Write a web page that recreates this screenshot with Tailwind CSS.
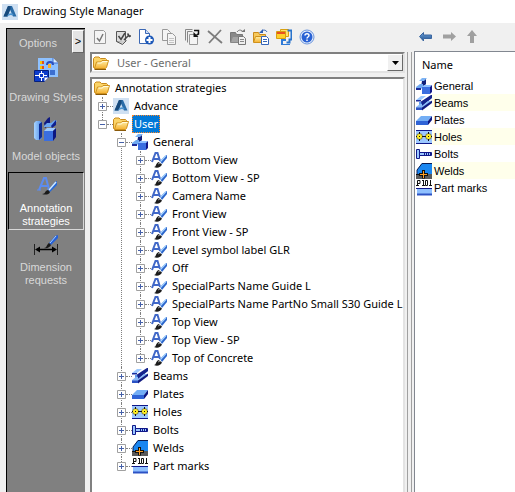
<!DOCTYPE html>
<html lang="en">
<head>
  <meta charset="UTF-8" />
  <meta name="viewport" content="width=device-width, initial-scale=1.0" />
  <title>Drawing Style Manager</title>
  <script src="https://cdn.jsdelivr.net/npm/@tailwindcss/browser@4"></script>
</head>
<body class="h-screen flex flex-col overflow-hidden bg-[#f0f0f0] text-black text-[11px] font-['Noto_Sans',sans-serif]">

  <!-- icon set (not display:none, the gradients would stop working) -->
  <svg class="absolute size-0">
    <defs>
      <linearGradient id="gFolder" x1="0" y1="0" x2="0" y2="1"><stop offset="0" stop-color="#fff0a8" /><stop offset="1" stop-color="#f5b02e" /></linearGradient>
      <linearGradient id="gBlue" x1="0" y1="0" x2="1" y2="0"><stop offset="0" stop-color="#a8d4ff" /><stop offset="1" stop-color="#4a8ae8" /></linearGradient>
      <linearGradient id="gArrow" x1="0" y1="0" x2="0" y2="1"><stop offset="0" stop-color="#6fa4da" /><stop offset="1" stop-color="#1f4f8f" /></linearGradient>
    </defs>
    <symbol id="folder" viewBox="0 0 16 16">
      <path d="M.5 12.500V3.500L2 2h4l1.500 1.500h5l1 1V7l-10 7z" fill="#fbd468" stroke="#c98a1c" />
      <path d="M1.500 13.500 3.500 7h4L9 5.500h6.500L13.500 12.500l-1 1z" fill="url(#gFolder)" stroke="#d0921c" />
      <path d="M4.500 8h4L9.500 6.500h5" fill="none" stroke="#fffbe0" />
      <path d="M1.500 14.500h11.500" stroke="#8a5a0a" />
    </symbol>
    <symbol id="logo" viewBox="0 0 16 16">
      <rect width="16" height="16" fill="#cfe0f2" />
      <path d="M6 2h4l4.500 10.500H11L8 5.500 5.500 12.500H1.500z" fill="#2a6ca8" />
      <path d="M6 2h2.500v3L5.500 12.500h-4z" fill="#174a7c" />
      <path d="M5 12.500c1-3 4-4 6.500-2.500l-.5 1.500C9 10.500 7 11 5 12.500z" fill="#4b93cf" />
    </symbol>
    <symbol id="general" viewBox="0 0 16 16">
      <path d="M3 3 6 0h5L9 2v5l-2 1V3z" fill="#7db4f5" />
      <path d="M6 3h2l2-2v5l-3 3H5z" fill="#10207a" />
      <path d="M0 9 4 6h3v3l-3 3H0z" fill="#6ea8f0" />
      <path d="M0 10h5v2H0z" fill="#1a2a9a" />
      <path d="m6 9 2-2h8l-2 2z" fill="#8fc0ff" />
      <path d="M6 9h8v7H6z" fill="#3a6ee0" />
      <path d="m14 9 2-2v7l-2 2z" fill="#10188a" />
    </symbol>
    <symbol id="beams" viewBox="0 0 16 16">
      <path d="m0 5 5-4h5L5 5z" fill="#9cc9ff" />
      <path d="M0 5h5v1.500H0z" fill="#1c2f9c" />
      <path d="M3 7h2l9-6h2v2L6 11v2H3z" fill="#5d9bee" />
      <path d="M5 6.500 15 0h1v3L6 11z" fill="#16248c" />
      <path d="M0 12 4 9h2v2l6-5h4L6 13H0z" fill="#8abaf7" />
      <path d="M0 12.500h6V15H0z" fill="#2c52c4" />
      <path d="m6 12.500 10-7V8L6 15.500z" fill="#101a80" />
    </symbol>
    <symbol id="plates" viewBox="0 0 16 16">
      <path d="m0 9 5-5h11l-4 5z" fill="#73aef5" />
      <path d="M0 9h12v4H0z" fill="#2f63d6" />
      <path d="m12 9 4-5v4l-4 5z" fill="#0c1680" />
    </symbol>
    <symbol id="holes" viewBox="0 0 16 16">
      <path d="M0 1h16v14H0z" fill="#9cc8ff" />
      <path d="M0 1.500h16M0 14.500h16" stroke="#10188a" />
      <circle cx="3.500" cy="7.500" r="3" fill="#ffee22" stroke="#444" stroke-width=".6" />
      <circle cx="12.500" cy="7.500" r="3" fill="#ffee22" stroke="#444" stroke-width=".6" />
      <path d="M0 7.500h1M3 7.500h1M6 7.500h4M12 7.500h1M15 7.500h1M3.500 3v2M3.500 10v2M12.500 3v2M12.500 10v2" stroke="#111" />
    </symbol>
    <symbol id="bolts" viewBox="0 0 16 16">
      <path d="M.5 3.500h3v9h-3z" fill="#9cc8ff" stroke="#10188a" />
      <path d="M3.500 6.500h12v3h-12z" fill="#9cc8ff" stroke="#10188a" />
      <path d="M8 8h8" stroke="#10188a" stroke-width="2" stroke-dasharray="1 1" />
    </symbol>
    <symbol id="welds" viewBox="0 0 16 16">
      <path d="M0 11h16v5H0z" fill="#5a5a5a" />
      <path d="M1 11V7l5-7h10v11z" fill="#1a86f0" />
      <path d="M1 11V7l5-6.500h10" fill="none" stroke="#0a1c50" />
      <path d="M0 11.500h4" stroke="#111" />
      <path d="M7.500 7v8.500M3 11.500h9" stroke="#111" stroke-width="3" />
      <path d="M7.500 8v7M4 11.500h7" stroke="#ffa025" />
    </symbol>
    <symbol id="marks" viewBox="0 0 16 16">
      <path d="M1.500 6V.5h2.500v3H2M7.500 0v5.500M6 .5h2M9.500.5h2v5h-2zM14.500 0v6M0 5.500h3M6 5.500h3M13 5.500h3" fill="none" stroke="#111" />
      <path d="M1 8h15v7H1z" fill="#8fc0ff" />
      <path d="M0 8.500h16" stroke="#10188a" />
      <path d="M1 14.500h15" stroke="#2c52c4" stroke-width="2" />
    </symbol>
    <symbol id="style" viewBox="0 0 16 16">
      <path d="M1 10 4.500 1h2L9 9M2.500 7H8" fill="none" stroke="#4168c8" stroke-width="2" />
      <path d="m9 9 5-5 2-1v3l-5 6z" fill="#2c66cc" />
      <path d="m9.500 9.500 5.500-6" stroke="#a8d4ff" stroke-width="1.200" />
      <path d="M3 15c2.500 0 1-3 4.500-5L11 12.500c-1 3-5 4-8 2.500z" fill="#1c1c1c" />
      <path d="m7 12 2-1" stroke="#999" />
    </symbol>
  </svg>

  <header class="h-[23px] shrink-0 bg-white flex items-center gap-[5px] pl-[2px]">
    <svg class="size-4"><use href="#logo" /></svg>
    <h1 class="text-[11px]">Drawing Style Manager</h1>
  </header>

  <main class="flex-1 min-h-0 flex pl-[6px]">

    <nav class="w-[79px] shrink-0 mt-[5px] bg-[#808080] border-l border-t border-black text-[#d8d8d8] text-[11px] leading-[13px] font-['Liberation_Sans',Arial,sans-serif]">
      <div class="h-[25px] flex items-center justify-between pl-3 pr-[1px]">
        <span class="pt-1">Options</span>
        <button aria-label="Collapse" class="w-3 h-[23px] bg-[#e4e4e4] border border-white border-r-[#666] border-b-[#666] text-black leading-none">&gt;</button>
      </div>
      <div class="flex flex-col gap-[1px] pl-[1px] pr-[1px]">
        <button class="min-h-[58px] flex flex-col items-center border border-transparent pt-[3px]">
          <svg class="w-6 h-6 mb-[9px]" viewBox="0 0 24 24">
            <path d="M4 0h15l5 5v14H4z" fill="#8ec1ff" />
            <path d="M19 0v5h5" fill="#dcecff" stroke="#3c6fd0" />
            <path d="M6 3h4v3H6zM6 8h4v3H6z" fill="#f7c400" />
            <path d="M8 3h2v3H8zM8 8h2v3H8z" fill="#e0521c" />
            <path d="M13 7c0-4 6-4 6 0" fill="none" stroke="#2b50c0" stroke-width="2" />
            <path d="M14 6h3v4h-3z" fill="#f7b030" />
            <path d="M16 12h5v5h-5z" fill="#3c6fd0" />
            <path d="M.5 12.500h14v7l-4 4h-10z" fill="#0c3ccc" stroke="#06207c" />
            <path d="M1 17.500h4M9 17.500h4M7.500 13v3M7.500 19v4M5.500 15.500h4v4h-4z" fill="none" stroke="#fff" />
            <path d="M10.500 23.500v-4h4z" fill="#fff" />
          </svg>
          <span>Drawing Styles</span>
        </button>
        <button class="min-h-[58px] flex flex-col items-center border border-transparent pt-[3px]">
          <svg class="w-6 h-6 mb-[9px]" viewBox="0 0 24 24">
            <path d="M0 6 2 4h4l2 2v15l-2 2H2l-2-2z" fill="url(#gBlue)" />
            <path d="m5 7 3-2v15l-3 3z" fill="#0e2a94" />
            <path d="m10 6 4-5 2-1v8l-5 3z" fill="#101a80" />
            <path d="m10 9 3-3h4l4-3 2 1-5 6h-8z" fill="#6aa6f2" />
            <path d="m17 9 5-6v5l-4 3z" fill="#0e2090" />
            <path d="m10 14 3-3h9l-3 3z" fill="#9cc9ff" />
            <path d="M10 14h9v10h-9z" fill="#3a6ee0" />
            <path d="m19 14 3-3v9l-3 4z" fill="#0c1680" />
          </svg>
          <span>Model objects</span>
        </button>
        <button class="min-h-[58px] flex flex-col items-center border border-black border-r-[#d8d8d8] border-b-[#d8d8d8] pt-[3px] text-white">
          <svg class="w-6 h-[22px] mb-1" viewBox="0 0 24 22">
            <path d="m5 14 5-12h2l3 11M7 10h7" fill="none" stroke="#5c8cf0" stroke-width="2" />
            <path d="M3 14h4M13 13h3" stroke="#5c8cf0" />
            <path d="m14 14 7-8 2-1v4l-7 7z" fill="#2468d8" />
            <path d="m15 14 7-8" stroke="#cfe8ff" stroke-width="1.500" />
            <path d="M8 18c4 0 2-3 6-4l2 2c-1 3-5 3-8 2z" fill="#1a1a1a" />
          </svg>
          <span>Annotation<br>strategies</span>
        </button>
        <button class="min-h-[58px] flex flex-col items-center border border-transparent pt-[3px]">
          <svg class="w-6 h-[22px] mb-1" viewBox="0 0 24 22">
            <path d="M.5 9v11M23.500 9v11" stroke="#222" />
            <path d="M3 14.500h18" stroke="#000" stroke-width="1.500" />
            <path d="m1 14.500 5-3v6zM23 14.500l-5-3v6z" fill="#000" />
            <path d="m15 8 6-7 3-1v3l-7 7z" fill="#2560d8" />
            <path d="m16 8 6-7" stroke="#a8d0ff" />
            <path d="M10 13c3 0 2-3 5-5l2 2c-1 2-4 4-7 3z" fill="#1a1a1a" />
          </svg>
          <span>Dimension<br>requests</span>
        </button>
      </div>
    </nav>

    <section class="w-[320px] shrink-0 flex flex-col pl-[3px]">
      <div class="h-[29px] shrink-0 flex items-center pb-[2px]">
        <button class="w-[23px] flex justify-center" aria-label="Apply">
          <svg class="size-4" viewBox="0 0 16 16">
            <path d="M2.500 1.500h9l2 2v11h-11z" fill="#f4f4f4" stroke="#999" />
            <path d="m5 9 2.500 3L11 5" fill="none" stroke="#777" stroke-width="1.500" />
          </svg>
        </button>
        <button class="w-[23px] flex justify-center" aria-label="Apply to">
          <svg class="size-4" viewBox="0 0 16 16">
            <path d="M1.500 2.500h9v10h-9z" fill="#ddd" stroke="#555" />
            <path d="m1.500 12.500 6 3 4-4" fill="#ccc" stroke="#555" />
            <path d="m3.500 7 2.500 3.500L10 4" fill="none" stroke="#444" stroke-width="1.500" />
            <path d="m9 11 4-4h3M12.500 4.500 15 8" fill="none" stroke="#444" stroke-width="1.500" />
          </svg>
        </button>
        <button class="w-[23px] flex justify-center" aria-label="New">
          <svg class="size-4" viewBox="0 0 16 16">
            <path d="M1.500.5h6l4 4v10h-10z" fill="#fff" stroke="#3c68b4" />
            <path d="M7.500.5v4h4" fill="#cfe0f8" stroke="#3c68b4" />
            <circle cx="11.500" cy="11" r="4.500" fill="#1c58b8" />
            <path d="M11.500 8v6M8.500 11h6" stroke="#fff" stroke-width="2" />
          </svg>
        </button>
        <button class="w-[23px] flex justify-center" aria-label="Copy">
          <svg class="size-4" viewBox="0 0 16 16">
            <path d="M1.500.5h5l3 3v8h-8z" fill="#f4f4f4" stroke="#999" />
            <path d="M6.500 4.500h5l3 3v8h-8z" fill="#f4f4f4" stroke="#999" />
            <path d="M8 9.500h5M8 11.500h5M8 13.500h5" stroke="#c4c4c4" />
          </svg>
        </button>
        <button class="w-[23px] flex justify-center" aria-label="Deep copy">
          <svg class="size-4" viewBox="0 0 16 16">
            <path d="M1.500 11.500V.5h7M3.500 13.500v-11h5" fill="none" stroke="#888" />
            <path d="M5.500 5.500h5l3 3v7h-8z" fill="#f4f4f4" stroke="#999" />
            <path d="M10 1.500h4.500V5l-2 1" fill="none" stroke="#111" stroke-width="1.500" />
            <path d="M9.500 3v5h5z" fill="#111" />
          </svg>
        </button>
        <button class="w-[23px] flex justify-center" aria-label="Delete">
          <svg class="size-4" viewBox="0 0 16 16">
            <path d="m1 2 14 12M14 1 2 14" stroke="#7c7c7c" stroke-width="1.800" />
          </svg>
        </button>
        <button class="w-[23px] flex justify-center" aria-label="Import">
          <svg class="size-4" viewBox="0 0 16 16">
            <path d="M.5 13V3.500h5l1 2h6V8" fill="#888" stroke="#777" />
            <path d="m.5 13.500 2-6h10l-2 6z" fill="#a4a4a4" stroke="#888" />
            <path d="M7 3c2-3 5-2 6 0" fill="none" stroke="#777" />
            <path d="M11 3h4v-3z" fill="#777" />
            <path d="M8.500 7.500h5l2 2v6h-7z" fill="#eee" stroke="#777" />
            <path d="M10 10.500h4M10 12.500h4" stroke="#888" />
          </svg>
        </button>
        <button class="w-[23px] flex justify-center" aria-label="Export">
          <svg class="size-4" viewBox="0 0 16 16">
            <path d="M.5 13V3.500h5l1 2h6V8" fill="#f7c95c" stroke="#c98a1c" />
            <path d="m.5 13.500 2-6h10l-2 6z" fill="url(#gFolder)" stroke="#d0921c" />
            <path d="M8 3c2-3 5-2 6 0" fill="none" stroke="#2a5cb0" />
            <path d="M6 4h4V0z" fill="#2a5cb0" />
            <path d="M8.500 7.500h5l2 2v6h-7z" fill="#fff" stroke="#3565b8" />
            <path d="M10 10.500h4M10 12.500h4" stroke="#3565b8" />
          </svg>
        </button>
        <button class="w-[23px] flex justify-center" aria-label="Refresh">
          <svg class="size-4" viewBox="0 0 16 16">
            <path d="M4.500.5h8v7h-8z" fill="#ffe070" stroke="#d8a010" />
            <path d="M.5 2.500h9v7h-9z" fill="#ffd02a" stroke="#d8a010" />
            <path d="M1 3h8v2H1z" fill="#e85020" />
            <path d="M11.500 1.500h4v9h-2v3h-3" fill="none" stroke="#2a74cc" stroke-width="2" />
            <path d="M5 10h5v2H7v3h7v1H5z" fill="#2e7ad8" />
          </svg>
        </button>
        <button class="w-[23px] flex justify-center" aria-label="Help">
          <svg class="size-4" viewBox="0 0 16 16">
            <circle cx="8" cy="8" r="7" fill="#e8f0fc" stroke="#6a94dc" />
            <circle cx="8" cy="8" r="5.500" fill="#2a62d4" />
            <path d="M6 6.500c0-2.500 4-2.500 4 0 0 1.500-2 1.500-2 3M8 10.500v1.500" fill="none" stroke="#fff" stroke-width="1.500" />
          </svg>
        </button>
      </div>

      <div class="h-[21px] shrink-0 ml-[2px] bg-white border-2 border-[#808080] border-r-[#e3e3e3] border-b-[#e3e3e3] flex items-center pl-[1px]">
        <svg class="size-4 shrink-0"><use href="#folder" /></svg>
        <select aria-label="Current style" class="flex-1 min-w-0 appearance-none bg-white pl-2 text-[#6d6d6d] leading-4">
          <option>User - General</option>
        </select>
        <span class="w-4 h-full shrink-0 bg-[#f0f0f0] border border-white border-r-[#696969] border-b-[#696969] flex items-center justify-center">
          <svg class="w-[7px] h-1" viewBox="0 0 7 4"><path d="M0 0h7L3.500 4z" fill="#000" /></svg>
        </span>
      </div>

      <div class="flex-1 min-h-0 mt-[4px] ml-[2px] bg-white border-2 border-b-0 border-[#808080] border-r-[#e3e3e3] pl-[2px] overflow-hidden">
        <div class="flex items-center gap-[3px] h-[18px]">
          <svg class="size-4 shrink-0"><use href="#folder" /></svg>
          <span class="px-[2px] leading-4 whitespace-nowrap">Annotation strategies</span>
        </div>
        <ul id="tree"></ul>
      </div>
    </section>

    <div class="w-[5px] shrink-0 mt-[29px] mx-[2px] bg-[#f0f0f0] border-x border-[#a0a0a0]"></div>

    <section class="flex-1 min-w-0 flex flex-col">
      <div class="h-[28px] shrink-0 flex items-center">
        <button class="w-[23px] flex justify-center" aria-label="Back">
          <svg class="size-4" viewBox="0 0 16 16"><path d="m1.500 7.500 4-4V6h8v3.500h-8V12z" fill="url(#gArrow)" stroke="#3a66a0" /></svg>
        </button>
        <button class="w-[23px] flex justify-center" aria-label="Forward">
          <svg class="size-4" viewBox="0 0 16 16"><path d="m15 7.500-5-4.500v2.500H2v4h8V12z" fill="#a0a0a0" /></svg>
        </button>
        <button class="w-[23px] flex justify-center" aria-label="Up">
          <svg class="size-4" viewBox="0 0 16 16"><path d="M8 1 3 7h3v7h4V7h3z" fill="#a0a0a0" /></svg>
        </button>
      </div>
      <div class="flex-1 bg-white border-l border-t border-[#828790] pl-[1px]">
        <table class="w-full border-collapse">
          <thead>
            <tr><th colspan="2" class="h-[25px] p-0 pl-[6px] pt-[1px] font-normal text-left leading-4">Name</th></tr>
          </thead>
          <tbody id="list" class="text-[11px] leading-4 font-['Liberation_Sans',Arial,sans-serif]"></tbody>
        </table>
      </div>
    </section>
  </main>

  <script>
    const strategies = ['Bottom View', 'Bottom View - SP', 'Camera Name', 'Front View', 'Front View - SP',
      'Level symbol label GLR', 'Off', 'SpecialParts Name Guide L', 'SpecialParts Name PartNo Small S30 Guide L',
      'Top View', 'Top View - SP', 'Top of Concrete'];
    const groups = [
      { name: 'General', icon: 'general', children: strategies.map(name => ({ name, icon: 'style' })) },
      { name: 'Beams', icon: 'beams' },
      { name: 'Plates', icon: 'plates' },
      { name: 'Holes', icon: 'holes' },
      { name: 'Bolts', icon: 'bolts' },
      { name: 'Welds', icon: 'welds' },
      { name: 'Part marks', icon: 'marks' }
    ];
    const tree = [
      { name: 'Advance', icon: 'logo' },
      { name: 'User', icon: 'folder', selected: true, children: groups }
    ];

    function renderNode(node, i, siblings) {
      const last = i === siblings.length - 1;
      const guide = last ? 'h-[9px]' : 'h-full';
      const label = node.selected ? 'bg-[#0078d7] text-white outline-1 -outline-offset-1 outline-dotted outline-[#ff8728]' : '';
      const plus = node.children ? '' : 'M4.5 2v5';
      return `
        <li class="relative">
          <span class="absolute top-0 left-[8px] border-l border-dotted border-[#808080] ${guide}"></span>
          <div class="flex items-center h-[18px]">
            <span class="w-[19px] shrink-0 flex items-center pl-[4px]">
              <svg class="relative size-[9px]" viewBox="0 0 9 9"><path d="M.5.5h8v8h-8z" fill="#fff" stroke="#a0a0a0" /><path d="M2 4.500h5${plus}" stroke="#4560a8" /></svg>
              <span class="flex-1 border-t border-dotted border-[#808080]"></span>
            </span>
            <svg class="size-4 shrink-0 mr-[3px]"><use href="#${node.icon}" /></svg>
            <span class="px-[2px] leading-[18px] whitespace-nowrap ${label}">${node.name}</span>
          </div>
          ${node.children ? `<ul class="pl-[19px]">${node.children.map(renderNode).join('')}</ul>` : ''}
        </li>`;
    }

    document.getElementById('tree').innerHTML = tree.map(renderNode).join('');
    document.getElementById('list').innerHTML = groups.map(g => `
      <tr class="group h-[17px]">
        <td class="w-4 p-0"><svg class="size-4"><use href="#${g.icon}" /></svg></td>
        <td class="p-0 pl-[2px] group-even:bg-[#ffffeb]">${g.name}</td>
      </tr>`).join('');
  </script>
</body>
</html>
